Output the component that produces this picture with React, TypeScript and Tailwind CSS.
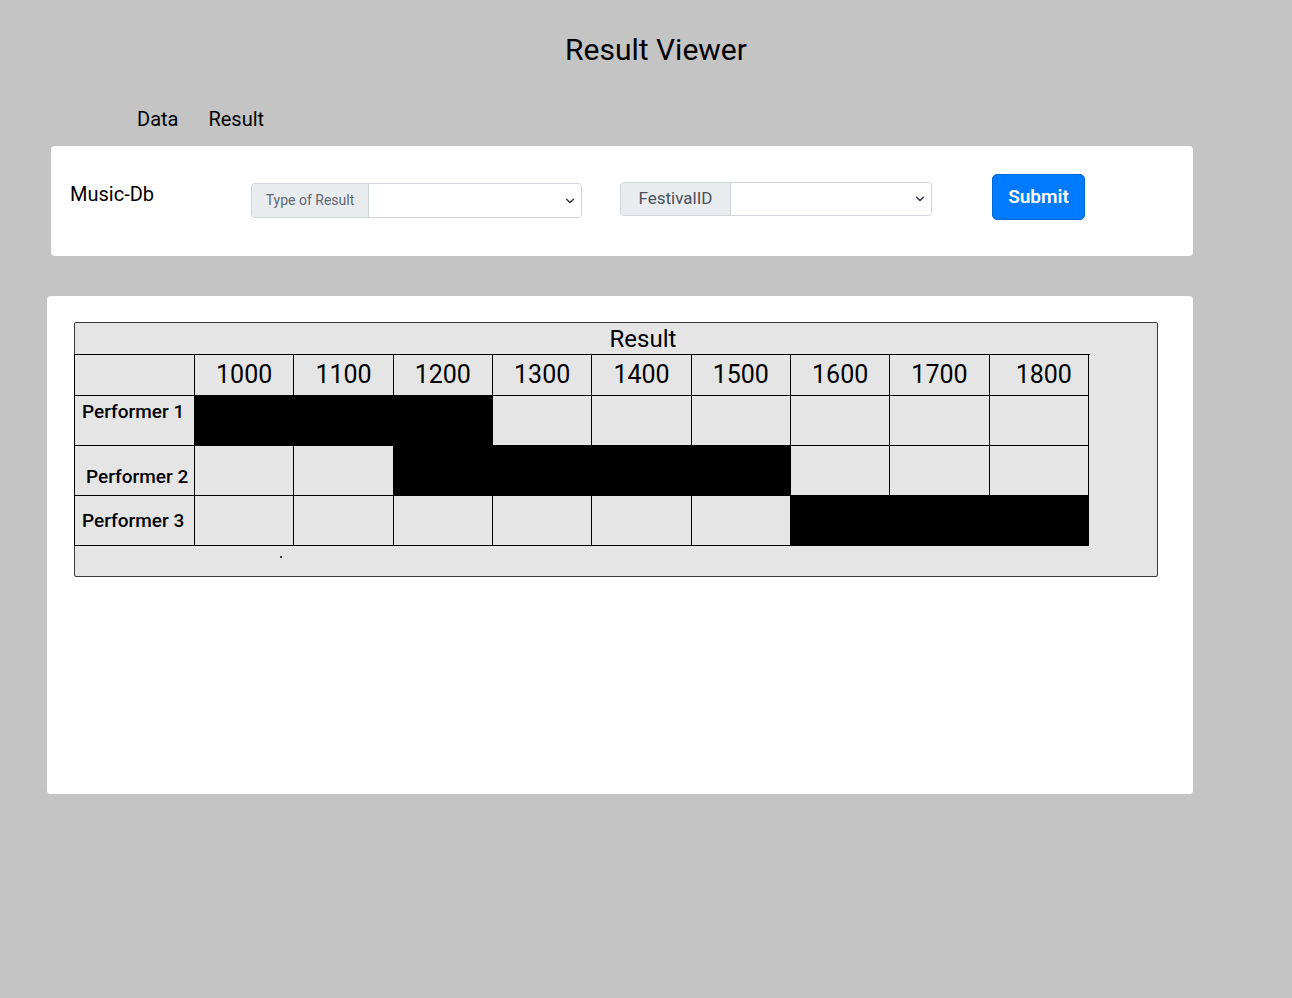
import type { ReactNode } from "react";
import { Fragment } from "react";

const HOURS = ["1000", "1100", "1200", "1300", "1400", "1500", "1600", "1700", "1800"];

// which slots are booked for each performer
const ROWS: { name: string; booked: number[]; align: string }[] = [
  { name: "Performer 1", booked: [0, 1, 2], align: "items-start pt-[5px] pl-[7px]" },
  { name: "Performer 2", booked: [2, 3, 4, 5], align: "items-end pb-[7px] pl-[11px]" },
  { name: "Performer 3", booked: [6, 7, 8], align: "items-center pl-[7px]" },
];

function Chevron() {
  return (
    <svg width="10" height="6" viewBox="0 0 10 6" className="text-[#343a40]">
      <path d="M1.5 1.2 5 4.6 8.5 1.2" fill="none" stroke="currentColor" strokeWidth="1.4" strokeLinecap="round" />
    </svg>
  );
}

function InputGroup({ label, labelClass, width, height }: { label: string; labelClass: string; width: string; height: string }) {
  return (
    <div className={`flex ${width} ${height} rounded-[4px] border border-[#ced4da] overflow-hidden`}>
      <div className={`flex items-center justify-center border-r border-[#ced4da] bg-[#e9ecef] ${labelClass}`}>{label}</div>
      <div className="flex flex-1 items-center justify-end bg-white pr-[6px]">
        <Chevron />
      </div>
    </div>
  );
}

function Cell({ children, black, className = "" }: { children?: ReactNode; black?: boolean; className?: string }) {
  return (
    <div className={`border-r border-b border-black ${black ? "bg-black" : ""} ${className}`}>{children}</div>
  );
}

export default function App() {
  return (
    <div className="min-h-[998px] w-full bg-[#c4c4c4] text-black" style={{ fontFamily: "Roboto, 'Liberation Sans', sans-serif" }}>
      <h1 className="pt-[30px] pl-[20px] text-center text-[30px] leading-[40px]">Result Viewer</h1>

      <nav className="mt-[37px] flex gap-[30px] pl-[137px] text-[20px] leading-[24px]">
        <span>Data</span>
        <span>Result</span>
      </nav>

      <div className="ml-[51px] mt-[15px] flex h-[110px] w-[1142px] items-start rounded-[4px] bg-white pt-[28px] pl-[19px]">
        <div className="mt-[8px] w-[181px] text-[20px] leading-[24px]">Music-Db</div>
        <div className="mt-[9px]">
          <InputGroup label="Type of Result" labelClass="w-[117px] text-[14px] text-[#5f6770]" width="w-[331px]" height="h-[35px]" />
        </div>
        <div className="ml-[38px] mt-[8px]">
          <InputGroup label="FestivalID" labelClass="w-[110px] text-[17px] text-[#495057]" width="w-[312px]" height="h-[34px]" />
        </div>
        <button className="ml-[60px] h-[46px] w-[93px] rounded-[5px] border border-[#0069d9] bg-[#007bff] text-[19px] font-semibold text-white">
          Submit
        </button>
      </div>

      <div className="ml-[47px] mt-[40px] h-[498px] w-[1146px] rounded-[4px] bg-white pt-[26px] pl-[27px]">
        <div className="h-[255px] w-[1084px] rounded-[2px] border border-[#3a3a3a] bg-[#e5e5e5]">
          <div className="flex h-[31px] items-end justify-center pb-[1px] text-[24px] leading-[28px]">
            <span className="ml-[54px]">Result</span>
          </div>
          <div className="-ml-px grid w-[1016px] grid-cols-[121px_repeat(9,99.33px)] border-t border-black">
            <Cell className="h-[41px] border-l border-l-black" />
            {HOURS.map((h, i) => (
              <Cell key={h} className="flex h-[41px] items-center justify-center text-[25px]">
                <span className={i === 8 ? "ml-[10px]" : ""}>{h}</span>
              </Cell>
            ))}
            {ROWS.map(r => (
              <Fragment key={r.name}>
                <Cell className={`flex h-[50px] border-l border-l-black text-[19px] font-medium leading-[22px] ${r.align}`}>
                  {r.name}
                </Cell>
                {HOURS.map((h, i) => (
                  <Cell key={r.name + h} black={r.booked.includes(i)} className="h-[50px]" />
                ))}
              </Fragment>
            ))}
          </div>
          <div className="relative h-[30px]">
            <span className="absolute left-[205px] top-[10px] h-[1.5px] w-[1.5px] rounded-full bg-black" />
          </div>
        </div>
      </div>
    </div>
  );
}
